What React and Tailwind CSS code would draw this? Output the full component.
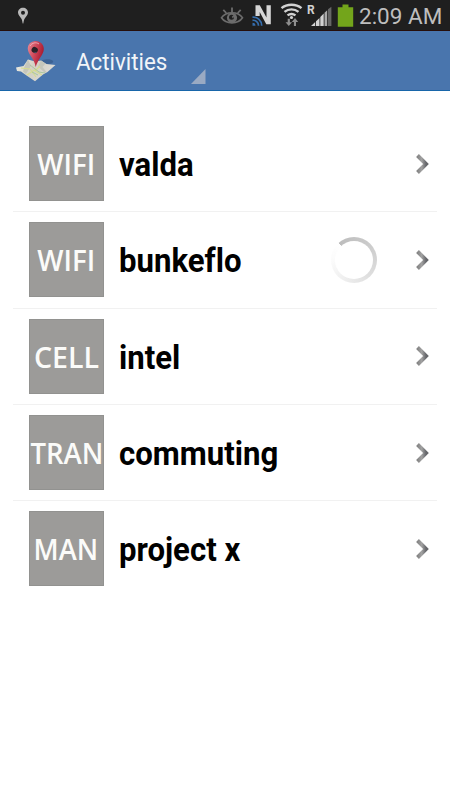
const ACTIVITIES = [
  { tag: 'WIFI', name: 'valda', tagClass: 'scale-x-[0.955]' },
  { tag: 'WIFI', name: 'bunkeflo', tagClass: 'scale-x-[0.955]', busy: true },
  { tag: 'CELL', name: 'intel', tagClass: 'translate-x-[0.5px] scale-x-[0.985]' },
  { tag: 'TRAN', name: 'commuting', tagClass: 'translate-x-[0.5px] scale-x-[0.95]' },
  { tag: 'MAN', name: 'project x', tagClass: '-translate-x-[0.5px] scale-x-[0.94]' },
];

function StatusBar() {
  return (
    <div className="flex h-[31px] items-start border-b border-[#260e0a] bg-[#1f1f1f]">
      <svg className="ml-[17px] mt-[7px] h-[18px] w-[12px] shrink-0" viewBox="0 0 12 18">
        <path
          fill="#b9b9b9"
          fillRule="evenodd"
          d="M6 .7C3.2.7 1 2.8 1 5.5c0 2.500 2.200 4.400 3.400 6.200.8 1.300.9 3 1.300 4.800h.6c.4-1.800.5-3.500 1.300-4.800C8.800 9.900 11 8 11 5.500 11 2.800 8.800.7 6 .7ZM6 3.700a2 2 0 1 1 0 4 2 2 0 0 1 0-4Z"
        />
      </svg>
      <svg className="ml-auto h-[30px] w-[146px] shrink-0" viewBox="210 0 146 30">
        <g fill="none" stroke="#6c6c6c" strokeWidth="1.600">
          <path d="M221.500 17.800C226 11 238 11 242.500 17.800C238 24.600 226 24.600 221.500 17.800Z" />
          <path strokeWidth="1.800" d="M223.300 9.800l3 3.200M232 7.500v4.500M240.700 9.800l-3 3.200" />
        </g>
        <circle cx="232" cy="17.800" r="5.100" fill="#6c6c6c" />
        <circle cx="231.500" cy="17.300" r="2.500" fill="#1f1f1f" />
        <path fill="#6c6c6c" d="M231.800 16.800l4-3.500-2.800 5.200Z" />
        <path fill="#d6d6d6" d="M255.500 5.200h4.300l6.700 12.300V5.200h4.300v19h-4.500l-6.600-12.300V16h-4.200Z" />
        <g fill="none" stroke="#356eae" strokeWidth="1.700">
          <path d="M252.500 17.200a8.500 8.500 0 0 1 9.200 8.500" />
          <path d="M252.500 20.300a5.300 5.300 0 0 1 6 5.400" />
        </g>
        <path fill="#356eae" d="M252.500 22.700a3 3 0 0 1 3 3h-3Z" />
        <g fill="none" stroke="#d2d2d2" strokeWidth="2.400">
          <path d="M281.500 8.200c5.500-4.600 14.500-4.600 20 0" />
          <path d="M284.500 11.900c4-3.300 10-3.300 14 0" />
          <path d="M287.500 15.400c2.400-1.800 5.600-1.800 8 0" />
        </g>
        <circle cx="291.500" cy="17.500" r="1.600" fill="#d2d2d2" />
        <path fill="#8e8e8e" d="M287.700 18.700h2.200v3.500h2.200l-3.300 3.900-3.300-3.900h2.200ZM293.900 26v-4h-2.100l3.200-4 3.200 4H296v4Z" />
        <text x="307" y="14.300" fill="#d2d2d2" className="font-['Roboto'] text-[12px] font-bold">R</text>
        <path fill="#d2d2d2" d="M311 26l4.200-4v4ZM316 21.200l3.500-3.300V26H316ZM320.300 17l3.400-3.400V26h-3.400Z" />
        <path fill="#aaa" d="M324.500 12.800l2.700-2.600V26h-2.700Z" />
        <path fill="#666" d="M328 9.200l3.400-2.500V26H328Z" />
        <path fill="#73a51b" d="M342.500 4.500h6v2.700h4.700v19.600h-15.400V7.200h4.700Z" />
      </svg>
      <span className="ml-[3px] mr-[8px] w-[83px] whitespace-nowrap font-['Roboto',sans-serif] text-[22.500px] leading-[33px] text-[#bebebe]">
        2:09 AM
      </span>
    </div>
  );
}

function MapIcon() {
  return (
    <svg className="h-[44px] w-[44px] shrink-0" viewBox="14 39 44 44">
      <defs>
        <linearGradient id="pin" x1="0" x2="1" y1="0" y2="0.400">
          <stop offset="0" stopColor="#e98c98" />
          <stop offset="0.500" stopColor="#d04a5c" />
          <stop offset="1" stopColor="#a7192f" />
        </linearGradient>
        <linearGradient id="paper" x1="0" x2="1" y1="0" y2="0.300">
          <stop offset="0" stopColor="#efeee5" />
          <stop offset="0.500" stopColor="#d3d1c4" />
          <stop offset="1" stopColor="#dddbd6" />
        </linearGradient>
      </defs>
      <path fill="#263f68" opacity="0.350" d="M38 63c3-4 13-5 15-2 1 2-3 3-9 4Z" />
      <path fill="url(#paper)" d="M16 67.500l7.500-1.500 4.500-6.500 7 2 6-1 5.500 3.500 9 1-8 7-4.500 2.500-8 6.800-8.500-5.800-5.500-4-4-.5Z" />
      <path fill="#c5c6bb" d="M28 59.500l3 6.500-5 8-3-2.500 1.500-5ZM41 60.500l-3 6 7 6.500 1.500-1-4-5 3-3.500Z" />
      <path fill="none" stroke="#d6dc8e" strokeWidth="1.100" d="M21 68l9 1 6 8M40 66l-5 5 7 4M27 75l9-6" />
      <path fill="none" stroke="#a5c59b" strokeWidth="0.900" d="M30 65l9 7 6 1M32 72l6 3" />
      <path fill="url(#pin)" d="M34 41.200c-4.600.8-6.900 4.600-6 9.100.9 4.800 6.300 8.600 7.700 16.700 1.700-7.300 8.200-12.500 8.100-18.300-.1-5.300-5-8.300-9.800-7.500Z" />
      <ellipse cx="34.700" cy="50" rx="3.200" ry="2.900" transform="rotate(30 34.700 50)" fill="#2b2126" />
      <path fill="#5b7aa5" d="M33.800 51.800c1.200.7 2.700.6 3.500-.4-.7 1.600-2.500 1.800-3.500.4Z" />
      <path fill="none" stroke="#f3bcc3" strokeWidth="0.800" d="M30 46c2-3.200 6-4.200 9-2" />
    </svg>
  );
}

function Header() {
  return (
    <header className="flex h-[60px] items-start border-b border-[#1866aa] bg-[#4975ad]">
      <div className="ml-[14px] mt-[8px]">
        <MapIcon />
      </div>
      <h1 className="ml-[18px] mt-[16px] w-[115px] origin-left scale-x-[0.97] whitespace-nowrap font-['Roboto',sans-serif] text-[23px] leading-[32px] text-[#f2f5f9]">
        Activities
      </h1>
      <svg className="mt-[38px] h-[15px] w-[15px]" viewBox="0 0 15 15">
        <path fill="#9aaac3" d="M14.500 0v15H0Z" />
      </svg>
    </header>
  );
}

function Spinner() {
  return (
    <div className="h-[46px] w-[46px] rounded-full bg-[conic-gradient(from_-42deg,#bdbdbd_0deg,#cacaca_80deg,#dddddd_170deg,#ededed_240deg,#fbfbfb_310deg,#ffffff_360deg)] p-[4px]">
      <div className="h-full w-full rounded-full bg-white" />
    </div>
  );
}

function Chevron() {
  return (
    <svg className="h-[22px] w-[16px]" viewBox="0 0 16 22">
      <defs>
        <linearGradient id="chev" x1="0" x2="1" y1="0" y2="0">
          <stop offset="0" stopColor="#858585" />
          <stop offset="0.500" stopColor="#a2a2a2" />
          <stop offset="1" stopColor="#66676b" />
        </linearGradient>
      </defs>
      <path fill="none" stroke="url(#chev)" strokeWidth="4" d="M3.500 2.500l8.500 8.500-8.500 8.500" />
    </svg>
  );
}

function ActivityRow({ item, last }) {
  return (
    <li className={`flex h-[96.300px] items-center border-b pl-[16px] ${last ? 'border-transparent' : 'border-[#f1f1f1]'}`}>
      <div className="flex h-[75px] w-[75px] shrink-0 items-center justify-center bg-[#9c9b99] outline outline-1 -outline-offset-1 outline-[#929290]">
        <span className={`whitespace-nowrap font-['Open_Sans',sans-serif] text-[29px] font-semibold leading-none text-[#fbfbf9] ${item.tagClass}`}>
          {item.tag}
        </span>
      </div>
      <span className="ml-[15px] origin-left scale-x-[0.958] whitespace-nowrap pt-[3px] font-['Roboto',sans-serif] text-[32.500px] font-bold leading-[38px] text-black [font-variant-ligatures:none]">
        {item.name}
      </span>
      <div className="ml-auto flex items-center">
        {item.busy && <Spinner />}
        <div className="ml-[37px] mr-[7px]">
          <Chevron />
        </div>
      </div>
    </li>
  );
}

export default function App() {
  return (
    <div className="flex h-[800px] w-[450px] flex-col overflow-hidden bg-white">
      <StatusBar />
      <Header />
      <ul className="mx-[13px] mt-[25px]">
        {ACTIVITIES.map((item, i) => (
          <ActivityRow key={item.name} item={item} last={i === ACTIVITIES.length - 1} />
        ))}
      </ul>
    </div>
  );
}
